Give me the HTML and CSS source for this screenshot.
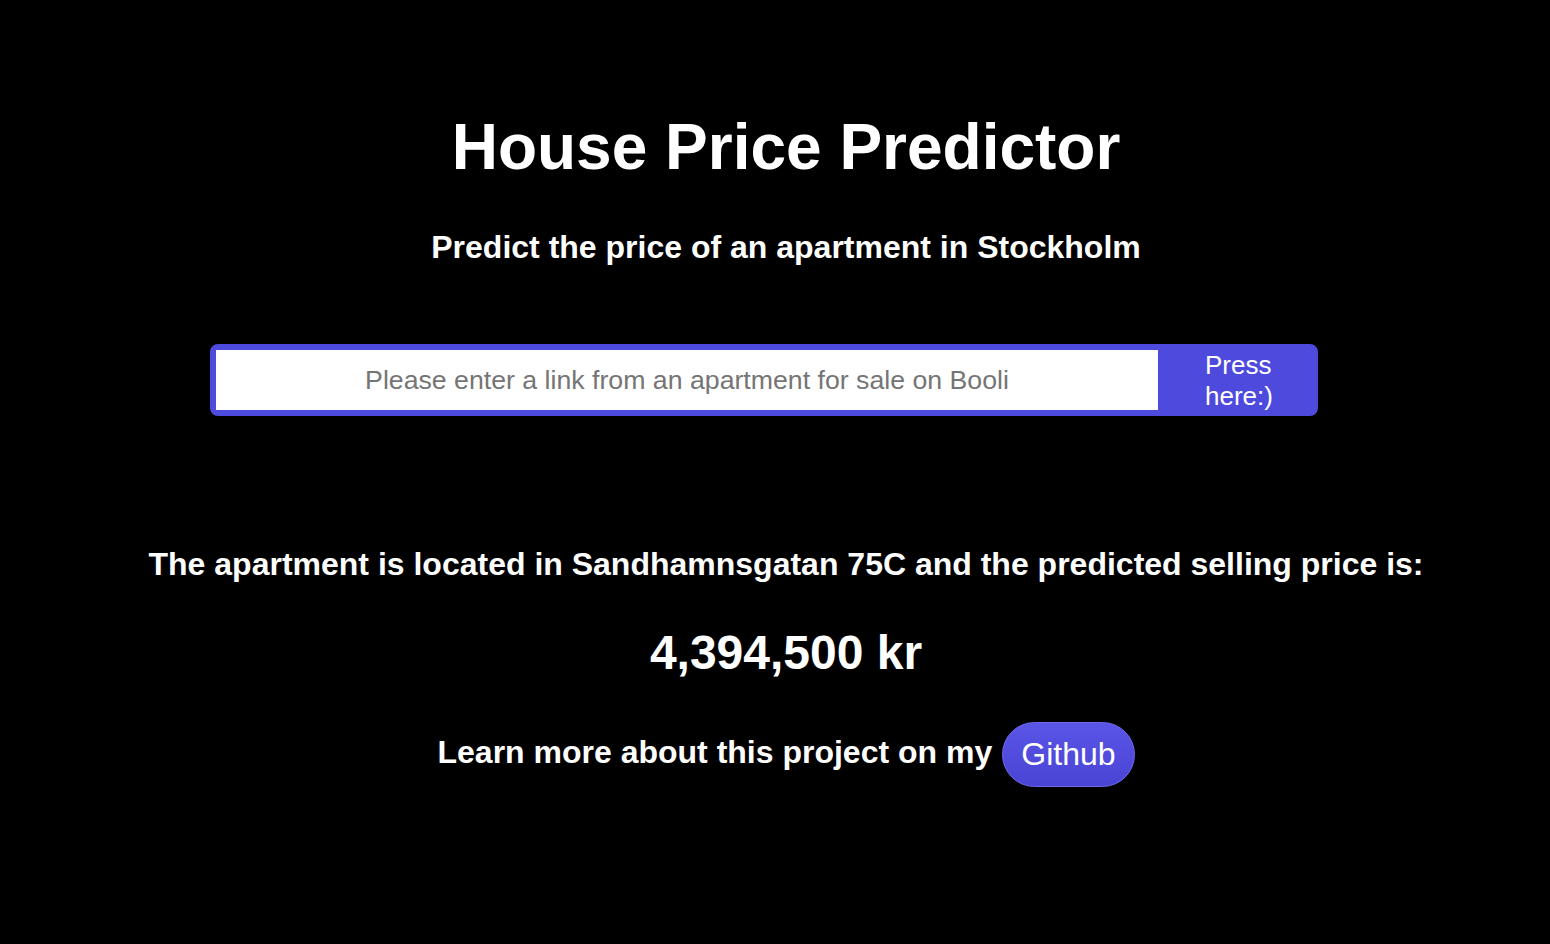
FILE: index.html
```html
<!DOCTYPE html>
<html lang="en">
<head>
<meta charset="utf-8">
<title>House Price Predictor</title>
<link rel="stylesheet" href="styles.css">
</head>
<body>
<main class="page">
  <h1 class="title">House Price Predictor</h1>
  <h2 class="subtitle">Predict the price of an apartment in Stockholm</h2>
  <form class="search">
    <input class="search-input" type="text" placeholder="Please enter a link from an apartment for sale on Booli">
    <button class="search-btn" type="button">Press here:)</button>
  </form>
  <p class="result">The apartment is located in Sandhamnsgatan 75C and the predicted selling price is:</p>
  <p class="price">4,394,500 kr</p>
  <p class="more"><span class="more-text">Learn more about this project on my</span> <a class="github" href="#">Github</a></p>
</main>
</body>
</html>
```

FILE: styles.css
```css
html, body {
  margin: 0;
  padding: 0;
  background: #000;
}
body {
  font-family: "Liberation Sans", Arial, Helvetica, sans-serif;
  color: #fff;
}
.page {
  display: flex;
  flex-direction: column;
  align-items: center;
  padding-top: 108px;
  padding-left: 22px;
}
.title {
  margin: 0;
  font-size: 64px;
  line-height: 78px;
  font-weight: 700;
}
.subtitle {
  margin: 41px 0 0;
  font-size: 32px;
  line-height: 40px;
  font-weight: 700;
}
.search {
  margin: 77px 44px 0 0;
  display: flex;
  width: 1108px;
  height: 72px;
  box-sizing: border-box;
  background: #4f4ade;
  border: 6px solid #4f4ade;
  border-radius: 8px;
}
.search-input {
  flex: 1;
  margin: 0;
  border: 0;
  padding: 0 12px;
  height: 60px;
  font-family: inherit;
  font-size: 26.7px;
  text-align: center;
  color: #222;
  background: #fff;
  outline: none;
}
.search-input::placeholder {
  color: #757575;
}
.search-btn {
  width: 154px;
  margin: 0;
  padding: 0 30px 0 47px;
  border: 0;
  background: transparent;
  color: #fff;
  font-family: inherit;
  font-size: 26px;
  line-height: 31px;
  text-align: left;
  cursor: pointer;
}
.result {
  margin: 128px 0 0;
  font-size: 32px;
  line-height: 40px;
  font-weight: 700;
}
.price {
  margin: 41px 0 0;
  font-size: 48px;
  line-height: 56px;
  font-weight: 700;
}
.more {
  margin: 40px 0 0;
  font-size: 32px;
  font-weight: 700;
  display: flex;
  align-items: center;
  gap: 10px;
}
.more-text {
  line-height: 62px;
  padding-bottom: 4px;
}
.github {
  display: inline-flex;
  align-items: center;
  height: 65px;
  box-sizing: border-box;
  padding: 0 18px;
  border-radius: 999px;
  border: 1px solid #6d68f0;
  background: linear-gradient(#5a55e6, #4944d4);
  color: #fff;
  font-weight: 400;
  text-decoration: none;
}
```
